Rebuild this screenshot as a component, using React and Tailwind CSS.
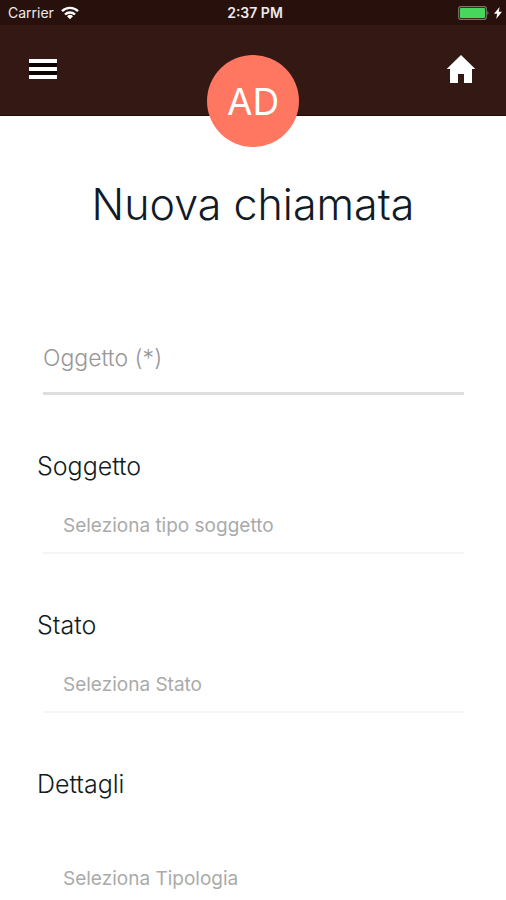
import { useState } from "react";

function StatusBar() {
  return (
    <div className="grid h-[25px] grid-cols-3 items-center bg-[#28110c] px-2 text-[14px] leading-4 text-[#eeeaea]">
      <div className="flex items-center gap-[7px]">
        <span>Carrier</span>
        <svg width="18" height="14" viewBox="0 0 18 14" fill="none" stroke="#fff" strokeWidth="2.4" aria-hidden="true">
          <path d="M1 5.2a11.4 11.4 0 0 1 16 0" />
          <path d="M4 8.5a7.2 7.2 0 0 1 10 0" />
          <path d="M9 13.2 6 10.3a4.3 4.3 0 0 1 6 0z" fill="#fff" stroke="none" />
        </svg>
      </div>
      <span className="pl-1 text-center font-semibold">2:37 PM</span>
      <div className="-mr-1 flex items-center justify-end gap-[5px]">
        <svg width="31" height="14" viewBox="0 0 31 14" aria-hidden="true">
          <rect x="0.7" y="0.7" width="27.6" height="12.6" rx="2" fill="none" stroke="#81736f" strokeWidth="1.2" />
          <rect x="2" y="2" width="25" height="10" rx="1" fill="#46d75c" />
          <path d="M29.3 4.8c1.6.8 1.6 3.6 0 4.4z" fill="#81736f" />
        </svg>
        <svg width="8" height="12" viewBox="0 0 8 12" fill="#fff" aria-hidden="true">
          <path d="M5.6 0 0 6.8h3.2L2.2 12 8 4.8H4.8z" />
        </svg>
      </div>
    </div>
  );
}

function Header() {
  return (
    <header className="relative flex h-[91px] items-start justify-between border-b border-[#280c08] bg-[#331814] px-7 pt-7">
      <button type="button" aria-label="Menu" className="flex h-8 w-8 items-center">
        <svg width="30" height="22" viewBox="0 0 30 22" aria-hidden="true">
          <path d="M1 1h28v20H1z" fill="#0c0504" />
          <path d="M1 1h28v4H1zM1 9h28v4H1zM1 17h28v4H1z" fill="#fff" />
        </svg>
      </button>
      <div className="absolute top-[30px] left-1/2 flex h-[92px] w-[92px] -translate-x-1/2 items-center justify-center rounded-full bg-[#ff7761] pt-[2px] text-[37px] text-white">
        AD
      </div>
      <button type="button" aria-label="Home" className="flex h-8 w-8 items-center">
        <svg width="30" height="30" viewBox="0 0 30 30" fill="#fff" aria-hidden="true">
          <path d="M15 1 0.7 15H4v14h8v-9h6v9h8V15h3.3z" />
        </svg>
      </button>
    </header>
  );
}

function SelectField({ id, label, placeholder, labelGap = "mt-[18px]" }) {
  const [value, setValue] = useState("");
  return (
    <div>
      <label htmlFor={id} className="block px-[37px] text-[25px] leading-8 font-light text-[#101b22]">
        {label}
      </label>
      <div className={"mr-[42px] ml-[43px] " + labelGap}>
        <select
          id={id}
          value={value}
          onChange={(event) => setValue(event.target.value)}
          className="block h-[54px] w-full appearance-none border-b-2 border-[#f5f5f5] bg-transparent px-5 text-[19px] text-[#aaaaaa] outline-none"
        >
          <option value="">{placeholder}</option>
        </select>
      </div>
    </div>
  );
}

export default function App() {
  return (
    <div className="min-h-screen bg-white font-['Inter',sans-serif]">
      <StatusBar />
      <Header />
      <main className="pt-[62px]">
        <h1 className="text-center text-[43px] leading-[52px] font-light text-[#101b26]">Nuova chiamata</h1>
        <form>
          <div className="mt-[102px] mr-[42px] ml-[43px]">
            <input
              type="text"
              aria-label="Oggetto"
              placeholder="Oggetto (*)"
              className="block h-[63px] w-full border-b-3 border-[#dedede] bg-transparent pb-2 text-[23px] font-light text-[#101b22] outline-none placeholder:text-[#989898]"
            />
          </div>
          <div className="mt-[55px] flex flex-col gap-[55px]">
            <SelectField id="soggetto" label="Soggetto" placeholder="Seleziona tipo soggetto" />
            <SelectField id="stato" label="Stato" placeholder="Seleziona Stato" />
            <SelectField id="dettagli" label="Dettagli" placeholder="Seleziona Tipologia" labelGap="mt-[53px]" />
          </div>
        </form>
      </main>
    </div>
  );
}
